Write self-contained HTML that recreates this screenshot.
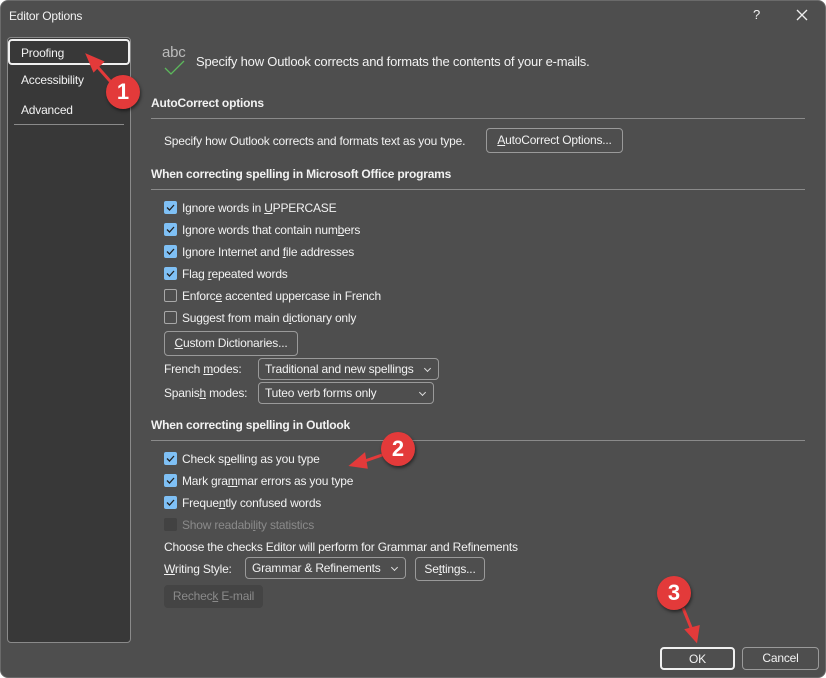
<!DOCTYPE html>
<html><head><meta charset="utf-8"><style>
*{margin:0;padding:0;box-sizing:border-box}
body{width:826px;height:678px;background:#fff;font-family:"Liberation Sans",sans-serif;font-size:12px;color:#f2f2f2;letter-spacing:-0.2px;overflow:hidden;position:relative}
.win{position:absolute;left:0;top:0;width:826px;height:678px;background:#4e4e4e;border:1px solid #6a6a6a;border-radius:8px}
.a{position:absolute;white-space:nowrap}
.nav{position:absolute;left:7px;top:37px;width:124px;height:606px;background:#383838;border:1px solid #8a8a8a;border-radius:4px}
.sel{position:absolute;left:8px;top:39px;width:122px;height:26px;border:2px solid #f0f0f0;border-radius:4px}
.hd{font-weight:bold}
.line{position:absolute;height:1px;background:#8a8a8a}
.btn{position:absolute;border:1px solid #9a9a9a;border-radius:4px;text-align:center;background:#4e4e4e}
.cb{position:absolute;width:13px;height:13px;border-radius:2px;background:#7fc0f5}
.cb svg{position:absolute;left:2px;top:2px}
.cb.off{background:transparent;border:1px solid #a8a8a8}
.cb.dis{background:#424242}
.dd{position:absolute;border:1px solid #9a9a9a;border-radius:4px;padding-left:6px}
.dd::after{content:"";position:absolute;right:8px;top:7px;width:4px;height:4px;border-right:1.3px solid #ddd;border-bottom:1.3px solid #ddd;transform:rotate(45deg)}
u{text-decoration:underline}
.badge{position:absolute;width:34px;height:34px;border-radius:50%;background:#e33a3a;color:#fff;font-weight:bold;font-size:22px;text-align:center;line-height:34px;box-shadow:1px 2px 3px rgba(0,0,0,.5);letter-spacing:0}
</style></head><body>
<div class="win"></div>
<div class="a" style="left:9px;top:9px">Editor Options</div>
<div class="a" style="left:753px;top:7px;font-size:13px">?</div>
<svg class="a" style="left:796px;top:9px" width="12" height="12"><path d="M1 1L11 11M11 1L1 11" stroke="#eee" stroke-width="1.3"/></svg>

<div class="nav"></div>
<div class="sel"></div>
<div class="a" style="left:21px;top:46px">Proofing</div>
<div class="a" style="left:21px;top:73px">Accessibility</div>
<div class="a" style="left:21px;top:103px">Advanced</div>
<div class="line" style="left:14px;top:124px;width:110px"></div>

<div class="a" style="left:162px;top:44px;font-size:15px;color:#bbb">abc</div>
<svg class="a" style="left:164px;top:60px" width="22" height="16"><path d="M1 8L7 14L20 1" stroke="#5cb85c" stroke-width="1.3" fill="none"/></svg>
<div class="a" style="left:196px;top:54px;font-size:13px">Specify how Outlook corrects and formats the contents of your e-mails.</div>

<div class="a hd" style="left:151px;top:96px">AutoCorrect options</div>
<div class="line" style="left:151px;top:118px;width:654px"></div>
<div class="a" style="left:164px;top:134px">Specify how Outlook corrects and formats text as you type.</div>
<div class="btn" style="left:486px;top:128px;width:137px;height:25px;line-height:23px"><u>A</u>utoCorrect Options...</div>

<div class="a hd" style="left:151px;top:167px">When correcting spelling in Microsoft Office programs</div>
<div class="line" style="left:151px;top:189px;width:654px"></div>

<div class="cb" style="left:164px;top:201px"><svg width="9" height="9"><path d="M1 4.5L3.5 7L8 2" stroke="#222" stroke-width="1.3" fill="none"/></svg></div>
<div class="a" style="left:182px;top:201px">Ignore words in <u>U</u>PPERCASE</div>
<div class="cb" style="left:164px;top:223px"><svg width="9" height="9"><path d="M1 4.5L3.5 7L8 2" stroke="#222" stroke-width="1.3" fill="none"/></svg></div>
<div class="a" style="left:182px;top:223px">Ignore words that contain num<u>b</u>ers</div>
<div class="cb" style="left:164px;top:245px"><svg width="9" height="9"><path d="M1 4.5L3.5 7L8 2" stroke="#222" stroke-width="1.3" fill="none"/></svg></div>
<div class="a" style="left:182px;top:245px">Ignore Internet and <u>f</u>ile addresses</div>
<div class="cb" style="left:164px;top:267px"><svg width="9" height="9"><path d="M1 4.5L3.5 7L8 2" stroke="#222" stroke-width="1.3" fill="none"/></svg></div>
<div class="a" style="left:182px;top:267px">Flag <u>r</u>epeated words</div>
<div class="cb off" style="left:164px;top:289px"></div>
<div class="a" style="left:182px;top:289px">Enforc<u>e</u> accented uppercase in French</div>
<div class="cb off" style="left:164px;top:311px"></div>
<div class="a" style="left:182px;top:311px">Suggest from main d<u>i</u>ctionary only</div>

<div class="btn" style="left:164px;top:331px;width:134px;height:25px;line-height:23px"><u>C</u>ustom Dictionaries...</div>
<div class="a" style="left:164px;top:362px">French <u>m</u>odes:</div>
<div class="dd" style="left:258px;top:358px;width:181px;height:22px;line-height:20px">Traditional and new spellings</div>
<div class="a" style="left:164px;top:386px">Spanis<u>h</u> modes:</div>
<div class="dd" style="left:258px;top:382px;width:176px;height:22px;line-height:20px">Tuteo verb forms only</div>

<div class="a hd" style="left:151px;top:418px">When correcting spelling in Outlook</div>
<div class="line" style="left:151px;top:440px;width:654px"></div>

<div class="cb" style="left:164px;top:452px"><svg width="9" height="9"><path d="M1 4.5L3.5 7L8 2" stroke="#222" stroke-width="1.3" fill="none"/></svg></div>
<div class="a" style="left:182px;top:452px">Check s<u>p</u>elling as you type</div>
<div class="cb" style="left:164px;top:474px"><svg width="9" height="9"><path d="M1 4.5L3.5 7L8 2" stroke="#222" stroke-width="1.3" fill="none"/></svg></div>
<div class="a" style="left:182px;top:474px">Mark gra<u>m</u>mar errors as you type</div>
<div class="cb" style="left:164px;top:496px"><svg width="9" height="9"><path d="M1 4.5L3.5 7L8 2" stroke="#222" stroke-width="1.3" fill="none"/></svg></div>
<div class="a" style="left:182px;top:496px">Freque<u>n</u>tly confused words</div>
<div class="cb dis" style="left:164px;top:518px"></div>
<div class="a" style="left:182px;top:518px;color:#8a8a8a">Show readabi<u>l</u>ity statistics</div>
<div class="a" style="left:164px;top:540px">Choose the checks Editor will perform for Grammar and Refinements</div>
<div class="a" style="left:164px;top:562px"><u>W</u>riting Style:</div>
<div class="dd" style="left:245px;top:557px;width:161px;height:22px;line-height:20px">Grammar &amp; Refinements</div>
<div class="btn" style="left:415px;top:557px;width:70px;height:24px;line-height:22px">Se<u>t</u>tings...</div>
<div class="btn" style="left:164px;top:585px;width:99px;height:23px;line-height:21px;background:#444;border-color:#444;color:#8a8a8a">Rechec<u>k</u> E-mail</div>

<div class="btn" style="left:660px;top:647px;width:75px;height:23px;line-height:21px;border:2px solid #f0f0f0">OK</div>
<div class="btn" style="left:742px;top:647px;width:77px;height:23px;line-height:21px">Cancel</div>

<svg class="a" style="left:0;top:0" width="826" height="678">
<g stroke="#e33a3a" stroke-width="3" fill="#e33a3a">
<path d="M118 90L94 63" fill="none"/><path d="M88 56L102 62L94 70Z"/>
<path d="M388 453L362 462" fill="none"/><path d="M352 465L364 455L366 467Z"/>
<path d="M683 608L692 630" fill="none"/><path d="M696 640L687 630L698 627Z"/>
</g></svg>
<div class="badge" style="left:106px;top:75px">1</div>
<div class="badge" style="left:381px;top:432px">2</div>
<div class="badge" style="left:657px;top:576px">3</div>
</body></html>
